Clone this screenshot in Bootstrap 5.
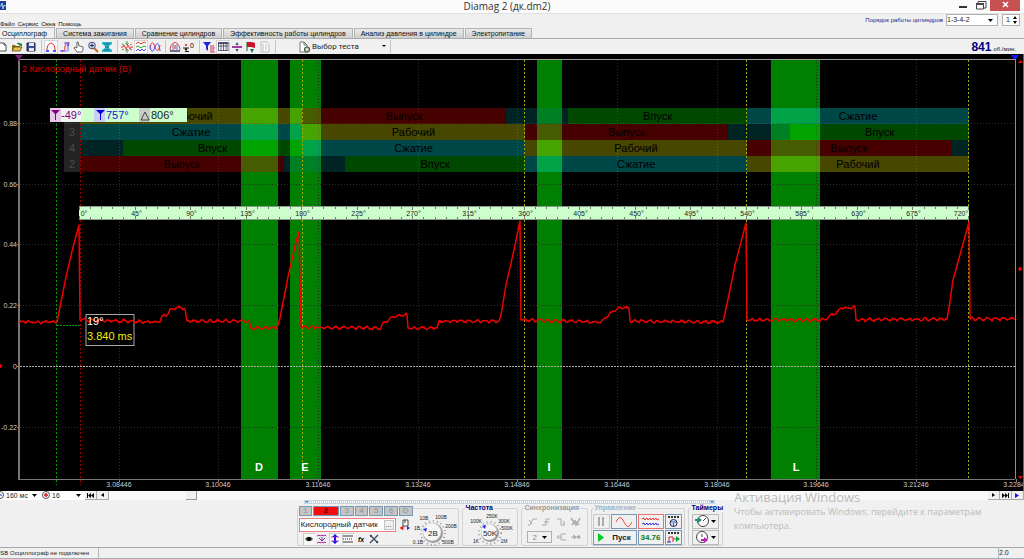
<!DOCTYPE html>
<html lang="ru">
<head>
<meta charset="utf-8">
<meta name="viewport" content="width=device-width, initial-scale=1">
<title>Diamag 2 (дк.dm2)</title>
<link rel="stylesheet" href="https://cdn.jsdelivr.net/npm/bootstrap@5.3.0/dist/css/bootstrap.min.css">
<style>
  body { background: #f0f0f0; color: #222; font: 7px/9px "Liberation Sans", Arial, sans-serif; overflow: hidden; }
  button, input, select { font: inherit; color: inherit; border-radius: 0; }
  svg { display: block; overflow: visible; }
  svg text { font-family: "Liberation Sans", Arial, sans-serif; }

  .titlebar { background: #fbfbfb; height: 13px; }
  .titlebar h1 { font: 10px/13px "Open Sans", sans-serif; color: #333; margin: 0 6px 0 0; }
  .side { flex: 1 1 0; }
  .win-btn { border: 0; background: none; height: 11px; width: 18px; padding: 0; }
  .win-close { background: #c75050; width: 30px; }

  .menurow { height: 15px; border-top: 1px solid #e2e2e2; font-size: 6px; line-height: 8px; }
  .menurow nav { gap: 3px; }
  .menurow .menu-link { color: #111; text-decoration: none; }
  .order-label { color: #1c1c8c; padding: 2px 3px 0 0; }
  .field { border: 1px solid #b0b0b0; background: #fff; height: 12px; padding: 0 4px 0 5px; font-size: 7px; }
  .sel { appearance: none; background: #fff no-repeat right 4px center / 5px 3px
         url("data:image/svg+xml,%3Csvg xmlns='http://www.w3.org/2000/svg' viewBox='0 0 5 3'%3E%3Cpath d='M0 0h5L2.5 3z'/%3E%3C/svg%3E"); }

  .tabs { height: 11px; border-bottom: 1px solid #aaa; }
  .tab-btn { border: 1px solid #b4b4b4; border-bottom: 0; background: linear-gradient(#e9e9e9, #cfcfcf); height: 10px; margin-right: 1px; padding: 0 6px; font-size: 7px; line-height: 9px; color: #111; white-space: nowrap; }
  .tab-btn.active { background: #f0f0f0; height: 11px; border-left: 0; padding: 0 7px 0 2px; }

  .tools { height: 15px; }
  .tool { width: 14px; height: 14px; border: 0; background: none; padding: 1px; }
  .tool.first { width: 10px; padding-left: 0; }
  .tool.down { background: #fafafa; box-shadow: inset 0 0 0 1px #d4d4d4; }
  .tool svg { width: 12px; height: 12px; }
  .rule-v { width: 6px; height: 13px; background: linear-gradient(#c4c4c4, #c4c4c4) center / 1px 100% no-repeat; }
  .test-btn { border: 0; background: none; font: 8px/9px Roboto, sans-serif; width: 88px; padding: 0; margin-left: 21px; gap: 1px; }
  .rpm { color: #00007a; font-size: 12px; line-height: 14px; }
  .rpm-unit { font-size: 6px; }

  .scope { background: #000; }
  .scope > svg { width: 100%; height: auto; }

  .scrollrow { height: 9px; background: #f9f9f9; }
  .scrollrow .sel { border: 0; height: 9px; padding: 0; background-color: #fff; }
  .step { width: 12px; height: 9px; padding: 0; border: 1px solid #aaa; border-width: 0 1px 1px 0; background: #f0f0f0; display: grid; place-items: center; }
  .thumb { width: 11px; height: 9px; margin-left: 77px; background: #f0f0f0; border: 1px solid #999; border-width: 0 1px 1px 0; }

  .panel { min-height: 47px; padding-right: 5px; }
  .splitter { width: 411px; height: 4px; border: 1px solid #c9d4dd; background: repeating-linear-gradient(90deg, #b5d9f2 0 1px, #fff 1px 2px); }
  .group { border: 1px solid #d2d2d2; border-radius: 2px; height: 38px; margin: 4px 0 0; padding: 0 1px; position: relative; min-width: 0; }
  .group > legend { position: absolute; top: -5px; left: 2px; width: auto; margin: 0; padding: 0 1px; background: #f0f0f0; font: bold 7px/8px "Liberation Sans", sans-serif; color: #00007a; float: none; }
  .chan { width: 14px; height: 10px; border: 1px solid #7898b4; background: #c4c4c4; color: #8a949c; padding: 0; line-height: 8px; font-size: 8px; }
  .chan.on { width: 26px; background: #f40d0d; color: #400; font-weight: bold; }
  .sensor-row { margin-top: 2px; }
  .sensor { border: 1px solid #f08080; background: #fff; height: 14px; width: 97px; }
  .sensor input { border: 0; padding: 0 0 0 1px; width: 84px; font-size: 8px; line-height: 10px; outline: 0; }
  .sensor button { border: 1px solid #c4c4c4; background: #f0f0f0; width: 10px; height: 10px; padding: 0; line-height: 6px; }
  .mini { width: 12px; height: 12px; border: 0; background: none; padding: 1px; }
  .mini svg { width: 10px; height: 10px; }
  .mini.up { background: #f8f8f8; box-shadow: inset 1px 1px #ccc; }
  .keys { padding-top: 5px; }
  .keys, .keys > div { gap: 1px; }
  .key { border: 1px solid #7797b3; background: #f0f0f0; height: 15px; padding: 0; display: flex; align-items: center; justify-content: center; font-size: 8px; }
  .key.gray { border-color: #c8c8c8; }
  .key.hot { border-color: #f07070; }
  .key.time { border-color: #bbb; width: 27px; gap: 2px; }
  .w-s { width: 17px; } .w-m { width: 26px; } .w-l { width: 44px; }
  .reading { color: #0a7a1a; font-weight: bold; }

  .status { height: 12px; border-top: 1px solid #a8a8a8; border-bottom: 1px solid #9fb0c0; background: #f0f0f0; font-size: 7px; line-height: 10px; }
  .status .cell { border-left: 1px solid #b8b8b8; }
  .usb { width: 98px; font-size: 6px; line-height: 11px; text-indent: -4px; }
  .watermark { position: absolute; left: 734px; top: -2px; color: #bbb; font: 9px/14px "Open Sans", sans-serif; width: 270px; pointer-events: none; }
  .watermark strong { display: block; font-weight: 400; font-size: 13px; line-height: 16px; }
</style>
</head>
<body>
<header>
  <div class="titlebar d-flex align-items-start">
    <div class="side"><svg width="8" height="12" viewBox="0 0 8 12" aria-hidden="true"><path fill="#1c3f94" d="M0 1h6v9H0z"/><path fill="none" stroke="#9fd0ff" d="M0 6h1l1-3 1 6 1-4 1 1h1"/></svg></div>
    <h1>Diamag 2 (дк.dm2)</h1>
    <div class="side d-flex justify-content-end pe-1">
      <button class="win-btn" aria-label="Свернуть"><svg width="18" height="11"><path d="M5 7h8" stroke="#333" stroke-width="2"/></svg></button>
      <button class="win-btn" aria-label="Развернуть"><svg width="18" height="11"><path d="M6 3V1.500h8V8h-2M4.500 3.500h7V9h-7z" fill="none" stroke="#444"/><path d="M4 4h8" stroke="#444" stroke-width="2"/></svg></button>
      <button class="win-btn win-close" aria-label="Закрыть"><svg width="30" height="11"><path d="M13 2l5 5M18 2l-5 5" stroke="#fff" stroke-width="1.500"/></svg></button>
    </div>
  </div>
  <div class="menurow d-flex justify-content-between">
    <nav class="d-flex align-items-end">
      <a class="menu-link" href="#">Файл</a><a class="menu-link" href="#">Сервис</a><a class="menu-link" href="#">Окна</a><a class="menu-link" href="#">Помощь</a>
    </nav>
    <div class="d-flex align-items-start pe-1">
      <label class="order-label" for="order">Порядок работы цилиндров</label>
      <select id="order" class="field sel ps-0" style="width:52px"><option>1-3-4-2</option></select>
      <div class="field d-flex align-items-center ms-1 p-0" style="width:18px">
        <input class="border-0 p-0 text-center" style="width:10px" value="1" aria-label="Цилиндр">
        <svg width="5" height="9"><path d="M0 3l2-3 2 3zM0 5h4L2 8z"/></svg>
      </div>
    </div>
  </div>
  <div class="tabs d-flex align-items-end" role="tablist">
    <button class="tab-btn active" role="tab">Осциллограф</button><button class="tab-btn" role="tab">Система зажигания</button><button class="tab-btn" role="tab">Сравнение цилиндров</button><button class="tab-btn" role="tab">Эффективность работы цилиндров</button><button class="tab-btn" role="tab">Анализ давления в цилиндре</button><button class="tab-btn" role="tab">Электропитание</button>
  </div>
  <div class="tools d-flex align-items-center">
    <button class="tool first" aria-label="Новый"><svg viewBox="0 0 12 12"><path d="M-1 2h5l2 2v6h-7M4 2v2h2" fill="#fff" stroke="#555"/></svg></button>
    <button class="tool" aria-label="Открыть"><svg viewBox="0 0 12 12"><path d="M1 10V4h3l1 1h4v5z" fill="#8a6d1b"/><path d="M1 10l2-4h8l-2 4z" fill="#e8c54a" stroke="#4a3a10" stroke-width=".7"/><path d="M6 3c1-2 3-1 4 0l1-1v3H8l1-1" fill="#1a8a2a"/></svg></button>
    <button class="tool" aria-label="Сохранить"><svg viewBox="0 0 12 12"><path d="M2 2h8v8H2z" fill="#39539a" stroke="#223"/><path d="M4 2h5v3H4zM4 7h5v3H4z" fill="#e4e8f4"/></svg></button>
    <span class="rule-v"></span>
    <button class="tool down" aria-label="Курсоры"><svg viewBox="0 0 12 12"><path d="M2 9C2 0 10 0 10 9" fill="none" stroke="#e22"/><path d="M1 10h3M8 10h3" stroke="#22f" stroke-width="1.500"/></svg></button>
    <button class="tool" aria-label="Фронт"><svg viewBox="0 0 12 12"><path d="M2 10h2C7 10 5 2 8 2h2" fill="none" stroke="#e22"/><path d="M5 2h6M1 10h7M9 3v7M8 5l1-2 1 2" stroke="#33f" fill="none" stroke-width=".8"/></svg></button>
    <button class="tool" aria-label="Рука"><svg viewBox="0 0 12 12"><path d="M4 11L1 7l1-1 2 1V1h1l1 4h1l3 1v3l-1 2z" fill="#fff" stroke="#444" stroke-width=".8"/></svg></button>
    <button class="tool" aria-label="Масштаб"><svg viewBox="0 0 12 12"><path d="M7 7l4 4" stroke="#b87020" stroke-width="2"/><circle cx="5" cy="4.500" r="3.300" fill="#d8ecff" stroke="#446"/><path d="M3 4.500h4M5 2.500v4" stroke="#225"/></svg></button>
    <button class="tool" aria-label="Сжать"><svg viewBox="0 0 12 12"><path d="M1 1h10v2L8 5v2l3 2v2H1V9l3-2V5L1 3z" fill="#25b8c8"/><path d="M3 3h6M4 6h4M3 9h6" stroke="#146a8a"/></svg></button>
    <span class="rule-v"></span>
    <button class="tool" aria-label="Центр"><svg viewBox="0 0 12 12"><path d="M0 6h2l1-2 2 4 2-4 2 4 1-2h2" fill="none" stroke="#e33"/><path d="M6 0v3M4.500 2L6 4l1.500-2M6 12V9M4.500 10L6 8l1.500 2M1 3l2 1M11 3L9 4M1 9l2-1M11 9L9 8" stroke="#2a7a3a" fill="none" stroke-width=".8"/></svg></button>
    <button class="tool down" aria-label="Разделить"><svg viewBox="0 0 12 12"><path d="M1 3l2-2 3 2 3-2 2 1" fill="none" stroke="#e33"/><path d="M1 6l2-1 3 2 3-2 2 1" fill="none" stroke="#2a2"/><path d="M1 10l2-2 2 2 2-2 2 2 2-2" fill="none" stroke="#44f"/></svg></button>
    <button class="tool" aria-label="Совместить"><svg viewBox="0 0 12 12"><path d="M1 8C2 0 4 0 6 6s4 4 5-2" fill="none" stroke="#e33"/><path d="M1 4c1 8 3 8 5 2s4-4 5 4" fill="none" stroke="#44f"/></svg></button>
    <span class="rule-v"></span>
    <button class="tool" aria-label="Область"><svg viewBox="0 0 12 12"><path d="M1 9C2-1 10-1 11 9" fill="none" stroke="#e33"/><path d="M4 3v6M8 3v6" stroke="#33a" stroke-width=".7"/><path d="M1 10h10" stroke="#446" stroke-width="1.500"/><path d="M6 4v4" stroke="#b22"/></svg></button>
    <button class="tool" aria-label="Ноль"><svg viewBox="0 0 12 12"><path d="M0 7h6M2 9l1-2 1 2zM2 10.500h4" stroke="#222"/><path d="M2 4h2" stroke="#b22" stroke-width="1.500"/><text x="7" y="7" font-size="7">0</text></svg></button>
    <span class="rule-v"></span>
    <button class="tool" aria-label="Фильтр"><svg viewBox="0 0 12 12"><path d="M0 1h8L5 5v5L3 8V5z" fill="#2424d8"/><path d="M7 5h4M7 7h5M7 9h4M7 11h5" stroke="#c3355a"/></svg></button>
    <button class="tool down" aria-label="Таблица"><svg viewBox="0 0 12 12"><path d="M1.500 2v8M4 2v8M6.500 2v8M9 2v8M11 2v8M1 5h10M1 9.500h10" stroke="#446" stroke-width=".8"/><path d="M1 2h10.500" stroke="#224" stroke-width="1.500"/></svg></button>
    <button class="tool" aria-label="Деление"><svg viewBox="0 0 12 12"><path d="M1 6h10" stroke="#808" stroke-width="1.500"/><path d="M4.500 4h3L6 1zM4.500 8h3L6 11z" fill="#346"/></svg></button>
    <button class="tool" aria-label="Флаг"><svg viewBox="0 0 12 12"><path d="M2 1h5l3 1v5L6 6H2z" fill="#c8142c"/><path d="M2 1v9" stroke="#0a6a2a"/><path d="M5 8h4l-2 4z" fill="#174"/></svg></button>
    <button class="tool" aria-label="Отчёт"><svg viewBox="0 0 12 12"><path d="M2 1h6l2 2v8H2z" fill="#fafafa" stroke="#bbb"/><path d="M4 3v7M6 4h2M6 6h2M6 8h2" stroke="#bbb"/></svg></button>
    <span class="rule-v"></span>
    <button class="test-btn d-flex align-items-center"><svg width="12" height="12" viewBox="0 0 12 12"><path d="M1 1h4l3 3v7H1zM5 1v3h3" fill="#fff" stroke="#555" stroke-width=".8"/><circle cx="8" cy="8.500" r="2.500" fill="#cfd8cf" stroke="#454" stroke-width="1.200"/></svg><span class="flex-grow-1 text-start">Выбор теста</span><svg width="5" height="3"><path d="M0 0h4L2 2z"/></svg></button>
    <span class="rule-v"></span>
    <div class="ms-auto pe-2 d-flex align-items-baseline" style="gap:2px"><b class="rpm">841</b><span class="rpm-unit">об./мин.</span></div>
  </div>
</header>

<main class="scope">
  <svg id="scope" viewBox="0 54 1024 437" role="img" aria-label="2 Кислородный датчик (В)"></svg>
</main>

<footer class="position-relative">
  <div class="scrollrow d-flex align-items-center">
    <svg width="6" height="9"><circle cx="0" cy="4" r="3.500" fill="#fff" stroke="#555"/><path d="M0 4h2" stroke="#22c"/></svg>
    <select class="sel" style="width:35px" aria-label="Длительность"><option>160 мс</option></select>
    <svg width="11" height="9"><circle cx="5" cy="4" r="3.500" fill="#fff" stroke="#555"/><path d="M3 4h4M5 2v4" stroke="#c22" stroke-width="1.500"/></svg>
    <select class="sel" style="width:33px" aria-label="Масштаб"><option>16</option></select>
    <button class="step" aria-label="В начало"><svg width="7" height="5"><path d="M0 0h1v5H0zM4 0v5L1 2.500zM7 0v5L4 2.500z"/></svg></button>
    <button class="step" aria-label="Назад"><svg width="3" height="4"><path d="M3 0v4L0 2z"/></svg></button>
    <div class="flex-grow-1 d-flex"><span class="thumb"></span></div>
    <button class="step" aria-label="Вперёд"><svg width="3" height="4"><path d="M0 0v4l3-2z"/></svg></button>
    <button class="step" aria-label="В конец"><svg width="7" height="5"><path d="M0 0v5l3-2.500zM3 0v5l3-2.500zM6 0h1v5H6z"/></svg></button>
    <button class="step" aria-label="Пуск записи"><svg width="5" height="5"><path d="M0 0v5l4-2.500z" fill="#11f"/></svg></button>
  </div>
  <div class="panel d-flex flex-column align-items-center">
    <div class="splitter d-flex justify-content-between"><svg width="4" height="3"><path d="M0 0h4L2 2z" fill="#28e"/></svg><svg width="4" height="3"><path d="M0 0h4L2 2z" fill="#28e"/></svg></div>
    <div class="d-flex" style="gap:3px">
      <fieldset class="group d-flex" style="width:162px">
        <div style="margin-top:-3px">
          <div class="d-flex" style="width:114px;gap:1px">
            <button class="chan">1</button><button class="chan on">2</button><button class="chan">3</button><button class="chan">4</button><button class="chan">5</button><button class="chan">6</button><button class="chan">D</button>
          </div>
          <div class="sensor-row d-flex align-items-center gap-1">
            <div class="sensor d-flex align-items-center"><input value="Кислородный датчик" aria-label="Датчик"><button aria-label="Выбрать датчик">...</button></div>
            <svg width="10" height="12" viewBox="0 0 10 12"><path d="M3 1h5v6H3zM5 1v3" fill="#fff" stroke="#444"/><path d="M0 9l3-2v4zM5 9H3" fill="#d22" stroke="#d22" stroke-width=".5"/><path d="M10 9L7 7v4z" fill="#22d"/></svg>
          </div>
          <div class="d-flex ps-1" style="gap:1px;padding-top:1px">
            <button class="mini up" aria-label="Видимость"><svg viewBox="0 0 10 10"><path d="M1 5c2-3 6-3 8 0-2 3-6 3-8 0z" fill="#555"/><circle cx="5" cy="5" r="2"/></svg></button>
            <button class="mini" aria-label="Инверсия"><svg viewBox="0 0 10 10"><path d="M0 2l2-1 1 1 2-1 1 1 2-1 1 1M0 9l2-1 1 1 2-1 1 1 2-1 1 1" stroke="#a2a" fill="none"/><path d="M2 4l3 3 3-3M5 3v4" stroke="#639" fill="none"/></svg></button>
            <button class="mini up" aria-label="Сдвиг"><svg viewBox="0 0 10 10"><path d="M5 0l3 3H6v4h2l-3 3-3-3h2V3H2z" fill="#11e"/><path d="M1 3h8M1 7h8" stroke="#a2a" stroke-width=".7"/></svg></button>
            <button class="mini up" aria-label="Линии"><svg viewBox="0 0 10 10"><path d="M0 2h10M0 8h10" stroke="#333"/><path d="M0 5h10" stroke="#333" stroke-dasharray="1 1"/></svg></button>
            <button class="mini" aria-label="Функция"><svg viewBox="0 0 10 10"><text x="2" y="8" font-size="7" font-weight="bold" font-style="italic">fx</text></svg></button>
            <button class="mini" aria-label="Настройка"><svg viewBox="0 0 10 10"><path d="M1 1l8 8M9 1L1 9" stroke="#456" stroke-width="1.500"/><path d="M1 3l2-2M7 9l2-2" stroke="#345"/></svg></button>
          </div>
        </div>
        <svg class="flex-shrink-0" width="44" height="36" viewBox="412 509 44 36" font-size="5"><g id="dial-v"></g></svg>
      </fieldset>
      <fieldset class="group ps-1" style="width:56px"><legend>Частота</legend>
        <svg width="50" height="36" viewBox="465 509 50 36" font-size="5"><g id="dial-f"></g></svg>
      </fieldset>
      <fieldset class="group" style="width:67px" disabled><legend style="color:#999">Синхронизация</legend>
        <div class="d-flex justify-content-between px-1 pt-2">
          <svg width="11" height="10" fill="none" stroke="#aaa"><path d="M1 8h2l3-6h4M2 3l3 4"/></svg>
          <svg width="11" height="10" fill="none" stroke="#aaa"><path d="M1 8h4V2h4M3 5h5"/></svg>
          <svg width="11" height="10" fill="none" stroke="#aaa"><path d="M1 2h4v6h4M8 4v4"/></svg>
          <svg width="11" height="10" fill="none" stroke="#aaa"><path d="M1 1l5 7 4-7M2 8l3-4 4 4" stroke-width="1.500"/></svg>
        </div>
        <div class="d-flex align-items-center justify-content-between pe-1 pt-1">
          <select class="field sel ms-1" style="width:25px;color:#888;background-color:#f0f0f0;font-size:8px" aria-label="Канал синхронизации"><option>2</option></select>
          <svg width="11" height="10" fill="none" stroke="#aaa"><path d="M1 5h4V2h5M5 5v3h5M3 3L1 5l2 2"/></svg>
          <svg width="11" height="10"><path d="M0 5h10M3 3l2 2-2 2zM8 3L6 5l2 2z" stroke="#aaa" fill="#aaa"/></svg>
        </div>
      </fieldset>
      <fieldset class="group" style="width:94px"><legend style="color:#9bb4cc">Управление</legend>
        <div class="keys d-flex flex-column">
          <div class="d-flex">
            <button class="key gray w-s" aria-label="Пауза"><svg width="7" height="9"><path d="M1 0v9M5 0v9" stroke="#aaa" stroke-width="2"/></svg></button>
            <button class="key w-m" aria-label="Синус"><svg width="18" height="10"><path d="M1 5c3-6 5-6 8 0s5 6 8 0" fill="none" stroke="#f44"/></svg></button>
            <button class="key hot w-m" aria-label="Два сигнала"><svg width="20" height="11" fill="none"><path d="M1 3l2-1 1 2 2-2 1 2 2-2 1 2 2-2 1 2 2-2 1 2 2-1" stroke="#e33"/><path d="M1 8l2-1 1 2 2-2 1 2 2-2 1 2 2-2 1 2 2-2 1 2 2-1" stroke="#33e"/></svg></button>
            <button class="key w-s" aria-label="Авто"><svg width="13" height="13"><path d="M1 2h11" stroke="#333" stroke-width="2" stroke-dasharray="2 1"/><circle cx="6.500" cy="8" r="3.500" fill="#dfe8ff" stroke="#224"/><path d="M4 7h5M6.500 8v3" stroke="#26c"/></svg></button>
          </div>
          <div class="d-flex">
            <button class="key w-l fw-bold gap-2"><svg width="6" height="9"><path d="M0 0v9l6-4.500z" fill="#0c2"/></svg>Пуск</button>
            <button class="key w-m reading">34.76</button>
            <button class="key w-s" aria-label="Автопуск"><svg width="13" height="13"><path d="M1 2h11" stroke="#333" stroke-width="2" stroke-dasharray="2 1"/><path d="M2 11V6h4v5M6 8h3" fill="none" stroke="#c24"/><path d="M9 5v6l4-3z" fill="#0a3"/><path d="M0 11h4" stroke="#22c"/></svg></button>
          </div>
        </div>
      </fieldset>
      <fieldset class="group" style="width:35px"><legend>Таймеры</legend>
        <div class="keys d-flex flex-column align-items-center">
          <button class="key time" aria-label="Таймер записи"><svg width="14" height="13"><circle cx="8" cy="6" r="5.500" fill="#fff" stroke="#444"/><path d="M8 6l3-3" stroke="#444"/><path d="M0 4h3V2l4 3-4 3V6H0z" fill="#2a8a80"/></svg><svg width="5" height="3"><path d="M0 0h5L2.500 3z"/></svg></button>
          <button class="key time" aria-label="Таймер остановки"><svg width="14" height="13"><circle cx="7" cy="6" r="5.500" fill="#fff" stroke="#444"/><path d="M7 6V3" stroke="#444"/><path d="M6 8h3V6l4 3-4 3v-2H6z" fill="#b2a"/></svg><svg width="5" height="3"><path d="M0 0h5L2.500 3z"/></svg></button>
        </div>
      </fieldset>
    </div>
  </div>
  <div class="status d-flex">
    <span class="usb">USB Осциллограф не подключен</span><span class="cell flex-grow-1"></span><span class="cell" style="width:26px">2.0</span>
  </div>
  <div class="watermark"><strong>Активация Windows</strong>Чтобы активировать Windows, перейдите к параметрам компьютера.</div>
</footer>

<script src="https://cdn.jsdelivr.net/npm/bootstrap@5.3.0/dist/js/bootstrap.bundle.min.js"></script>
<script>
  const out = [];
  const rect = (x, y, w, h, fill, more = '') => out.push(`<rect x="${x}" y="${y}" width="${w}" height="${h}" fill="${fill}" ${more}/>`);
  const line = (x1, y1, x2, y2, stroke, more = '') => out.push(`<line x1="${x1}" y1="${y1}" x2="${x2}" y2="${y2}" stroke="${stroke}" ${more}/>`);
  const text = (x, y, s, size, fill, more = '') => out.push(`<text x="${x}" y="${y}" font-size="${size}" fill="${fill}" ${more}>${s}</text>`);
  const path = (d, more) => out.push(`<path d="${d}" ${more}/>`);
  const mid = 'text-anchor="middle"';

  /* green event bands */
  const bands = [[241, 37, 'D', 259], [290, 31, 'E', 305], [537, 25, 'I', 549], [771, 49, 'L', 796]];
  bands.forEach(b => rect(b[0], 59, b[1], 420, '#008000'));

  /* grid and axes */
  ['3.08446', '3.10046', '3.11646', '3.13246', '3.14846', '3.16446', '3.18046', '3.19646', '3.21246', '3.2284'].forEach((t, i) => {
    const x = Math.round(118.5 + i * 99.7);
    if (i < 9) line(x + .5, 60, x + .5, 479, '#2c2c2c', 'stroke-dasharray="1 2"');
    line(x + .5, 479, x + .5, 482, '#888');
    text(i < 9 ? x : 1014, 487, t, 7, '#ccc', mid);
  });
  [['0.88', 123], ['0.66', 184], ['0.44', 244], ['0.22', 305], ['0', 366], ['-0.22', 427]].forEach(([t, y]) => {
    line(20, y + .5, 1015, y + .5, t === '0' ? '#aaa' : '#2c2c2c', t === '0' ? 'stroke-dasharray="2 1"' : 'stroke-dasharray="1 2"');
    line(17, y + .5, 20, y + .5, '#888');
    text(17, y + 3, t, 7, '#ccc', 'text-anchor="end"');
  });

  /* cylinder strokes, one row per cylinder */
  const tint = { R: ['#ff0', 'Рабочий'], C: ['#0ff', 'Сжатие'], I: ['#0f0', 'Впуск'], E: ['#f00', 'Выпуск'], o: ['#008080', ''] };
  const rows = [
    ['', 'R', 80, 302, 'E', 302, 506, 'o', 506, 568, 'I', 568, 747, 'C', 747, 969],
    ['3', 'C', 80, 302, 'R', 302, 525, 'E', 525, 728, 'o', 728, 790, 'I', 790, 969],
    ['4', 'o', 80, 123, 'I', 123, 302, 'C', 302, 525, 'R', 525, 747, 'E', 747, 951, 'o', 951, 969],
    ['2', 'E', 80, 284, 'o', 284, 345, 'I', 345, 525, 'C', 525, 747, 'R', 747, 969]
  ];
  rows.forEach((r, k) => {
    const y = 108 + k * 16;
    rect(64, y, 16, 16, '#808080', 'opacity=".28"');
    if (r[0]) text(72, y + 12, r[0], 11, '#4c4c4c', mid);
    for (let i = 1; i < r.length; i += 3) {
      rect(r[i + 1], y, r[i + 2] - r[i + 1], 16, tint[r[i]][0], 'opacity=".28"');
      if (tint[r[i]][1]) text((r[i + 1] + r[i + 2]) / 2, y + 12, tint[r[i]][1], 11, '#000', mid);
    }
  });

  /* frame and vertical markers */
  line(20, 59.5, 1015, 59.5, '#999'); line(19, 479.5, 1015, 479.5, '#777');
  rect(18, 59, 2, 421, '#777'); rect(1015, 56, 1, 423, '#8080ff'); rect(1023, 54, 1, 437, '#666');
  line(56.5, 60, 56.5, 485, '#00a000', 'stroke-dasharray="2 2"');
  line(80.5, 60, 80.5, 485, '#a00000', 'stroke-dasharray="2 2"');
  line(57, 325.5, 80, 325.5, '#00a000', 'stroke-dasharray="2 1"');
  [302, 524, 746, 968].forEach(x => line(x + .5, 60, x + .5, 479, '#a8a800', 'stroke-dasharray="2 2"'));

  /* crankshaft angle ruler */
  rect(79, 206, 890, 14, '#ccffcc'); line(79, 206.5, 969, 206.5, '#8a9a8a'); line(79, 219.5, 969, 219.5, '#8a9a8a');
  for (let a = 0; a <= 720; a += 9) {
    const x = Math.round(80 + a * 889 / 720) - .5, big = a % 45 === 0 ? 3 : 2;
    line(x, 207, x, 207 + big, '#555', 'stroke-width=".8"'); line(x, 219, x, 219 - big, '#555', 'stroke-width=".8"');
    if (a % 45 === 0) text(a ? (a === 720 ? 961 : x + 1) : 84, 216, a + '°', 7, '#222', mid);
  }

  /* time readout */
  rect(86, 314.5, 48, 31, 'none', 'stroke="#aaa"');

  /* sensor signal: flat parts carry ripple, "j" marks a clean edge */
  const pts = [[19,322],[57,322],[60,307,'j'],[66,277,'j'],[73,247,'j'],[79,225,'j'],[80,320,'j'],[159,322],[163,316],[167,315],[171,309],[181,307],[185,309],[187,321,'j'],[249,321],[251,328,'j'],[277,328],[280,318,'j'],[288,277,'j'],[296,242,'j'],[299,232,'j'],[301,327,'j'],[381,328],[384,322],[394,317],[400,315],[407,315],[408,328,'j'],[437,328],[439,321,'j'],[499,321],[501,315,'j'],[506,285,'j'],[514,250,'j'],[520,221,'j'],[521,320,'j'],[601,322],[613,311],[621,308],[629,308],[630,321,'j'],[723,322],[725,313,'j'],[730,290,'j'],[735,265,'j'],[746,223,'j'],[747,320,'j'],[826,320],[830,315],[836,314],[841,308],[848,308],[855,307],[856,320,'j'],[947,319],[949,308,'j'],[953,280,'j'],[958,262,'j'],[969,222,'j'],[970,319,'j'],[1015,319]];
  let d = 'M19 322';
  for (let i = 1; i < pts.length; i++) {
    const [x0, y0] = pts[i - 1], [x1, y1, edge] = pts[i];
    if (!edge) for (let x = x0 + 1; x < x1; x++) {
      const n = Math.sin(x * 12.9898) * 43758.5453, noise = n - Math.floor(n) - .5;
      d += `L${x} ${(y0 + (y1 - y0) * (x - x0) / (x1 - x0) + Math.sin(x * .8) * 1.1 + noise * 1.8).toFixed(1)}`;
    }
    d += `L${x1} ${y1}`;
  }
  path(d, 'fill="none" stroke="#f00000" stroke-width="1.500" stroke-linejoin="round"');

  /* captions and cursor readout */
  text(87, 325, '19°', 11, '#fff'); text(87, 340, '3.840 ms', 11, '#f0f000');
  text(22, 72, '2 Кислородный датчик (В)', 9, '#d80000');
  bands.forEach(b => text(b[3], 471, b[2], 11, '#fff', mid + ' font-weight="bold"'));
  rect(50, 108, 137, 14, '#ccffcc'); rect(50, 108, 11, 14, '#e6c8e6'); rect(61, 108, 20, 14, '#eef4ee');
  rect(94, 108, 11, 14, '#ccccf4'); rect(139, 108, 11, 14, '#c8ccc8');
  path('M51 110h9l-4 4v6h-1v-6z', 'fill="#800080"'); path('M96 110h9l-4 4v6h-1v-6z', 'fill="#0000e0"');
  path('M145 112l4 8h-8z', 'fill="none" stroke="#444"');
  text(61, 119, '-49°', 11, '#800080'); text(106, 119, '757°', 11, '#1414e0'); text(151, 119, '806°', 11, '#222');
  path('M15 55h8l-3 3v3h-2v-3z', 'fill="#902090"'); path('M1011 55h8l-3 4h-2z', 'fill="#1414ff"');
  path('M1018 63h5l-2.5-3zM1018 476h5l-2.5 3zM1018 269l2-2.5 2 2.5-2 2.5z', 'fill="#f00"');
  out.push('<circle cx="0" cy="366" r="2" fill="#f00"/>');
  document.getElementById('scope').innerHTML = out.join('');

  /* rotary knobs */
  const knob = (id, cx, cy, r, value, tip, labels) => {
    let s = `<circle cx="${cx}" cy="${cy}" r="${r + 3}" fill="none" stroke="#999" stroke-width="2" stroke-dasharray="1 3"/><circle cx="${cx}" cy="${cy}" r="${r + 1}" fill="#999"/><circle cx="${cx - 1}" cy="${cy - 1}" r="${r}" fill="#f6f6f6" stroke="#ccc" stroke-width=".6"/>`;
    s += `<text x="${cx}" y="${cy + 3}" font-size="8" text-anchor="middle" fill="#222">${value}</text><path d="M${tip[0]} ${tip[1]}l4-1-1 4z" fill="#22f"/>`;
    labels.forEach(l => s += `<text x="${l[1]}" y="${l[2]}" text-anchor="middle" fill="#222">${l[0]}</text>`);
    document.getElementById(id).innerHTML = s;
  };
  knob('dial-v', 432, 533, 9, '2В', [422, 529], [['0.1В', 417, 544], ['1В', 416, 530], ['10В', 423, 520], ['100В', 440, 519], ['200В', 450, 528], ['500В', 447, 544]]);
  knob('dial-f', 488, 533, 8, '50K', [480, 526], [['1K', 474, 543], ['100K', 474, 523], ['250K', 490, 518], ['300K', 502, 523], ['500K', 505, 530], ['1M', 502, 543]]);
</script>
</body>
</html>
